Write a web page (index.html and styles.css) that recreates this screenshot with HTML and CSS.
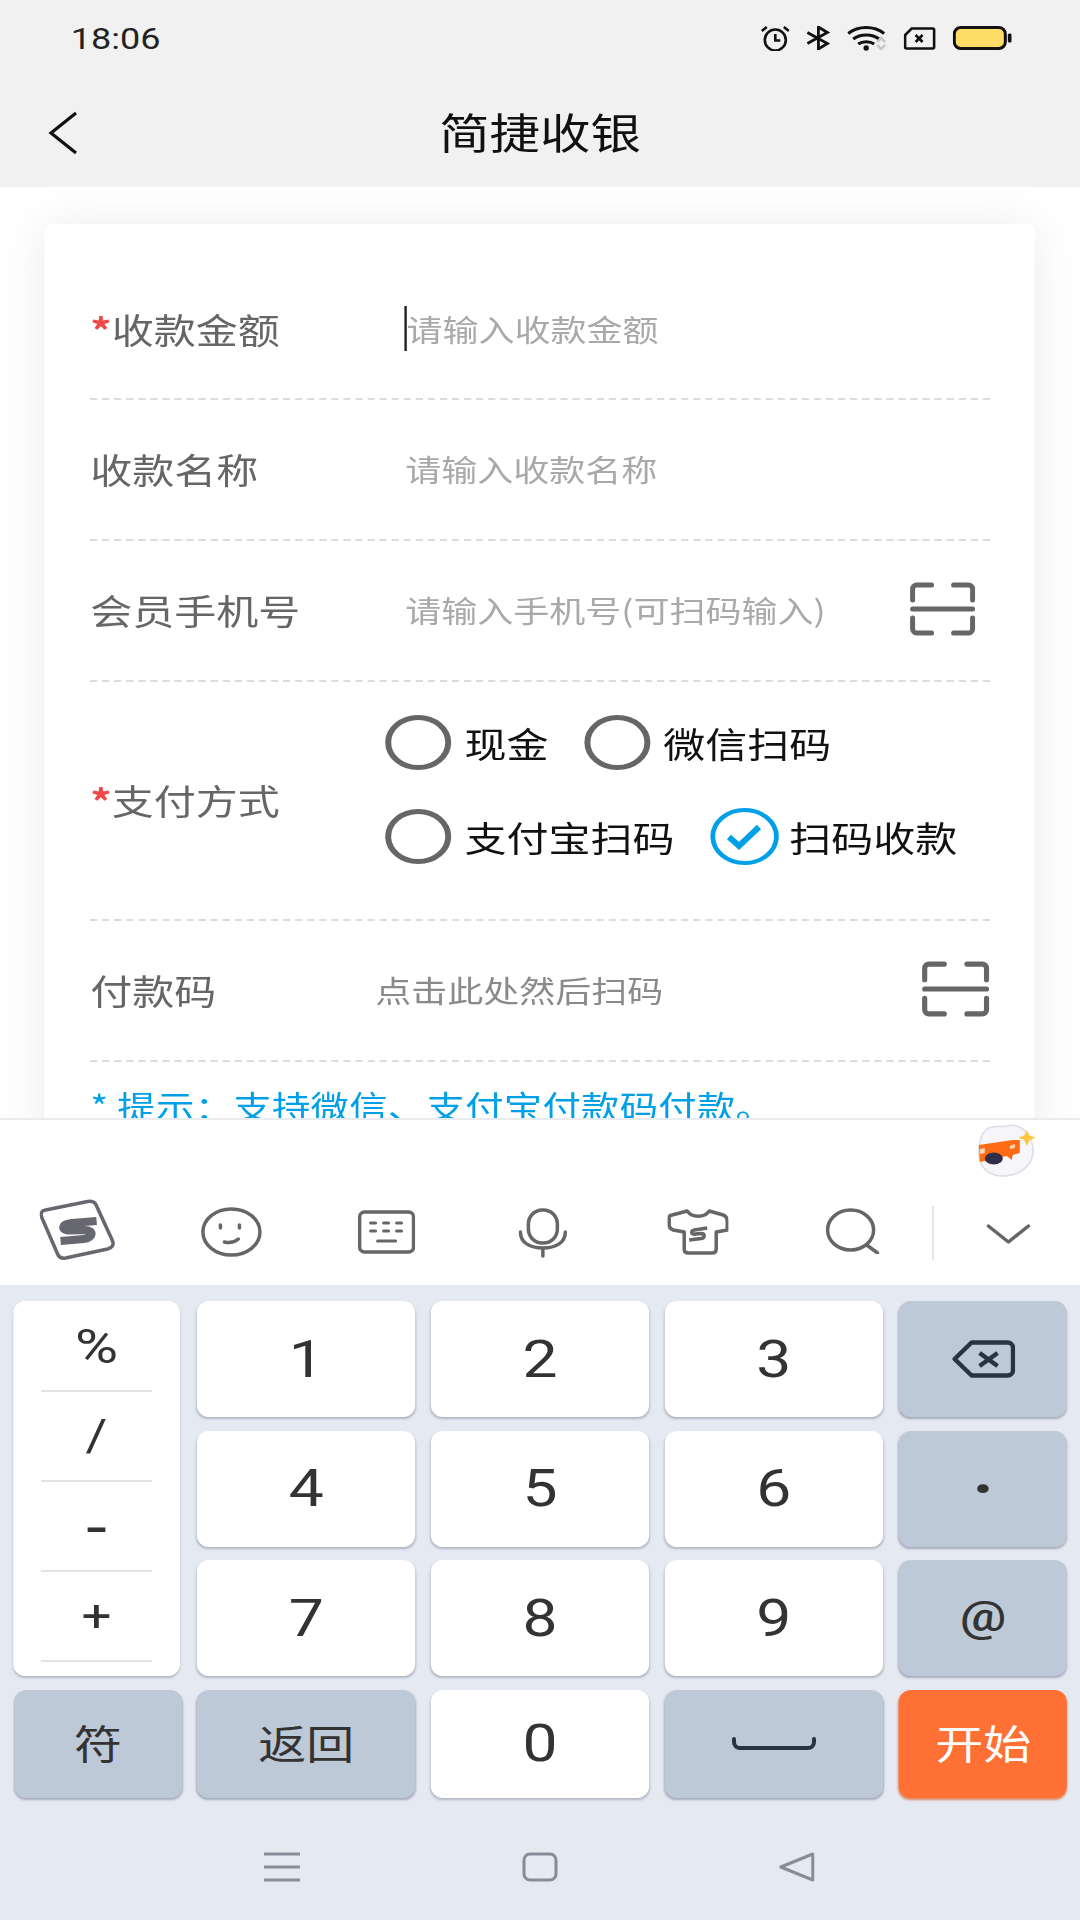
FILE: index.html
```html
<!DOCTYPE html>
<html lang="zh-CN">
<head>
    <meta charset="UTF-8">
    <meta name="viewport" content="width=device-width, initial-scale=1.0">
    <title>简捷收银</title>
    <link rel="stylesheet" href="styles.css">
</head>
<body>
    <header class="top">
        <div class="status-bar">
            <span class="clock">18:06</span>
            <div class="status-icons">
                <svg width="24.200" height="25" viewBox="0 0 29 25" preserveAspectRatio="none" fill="none" stroke="#111" stroke-width="2.600">
                    <circle cx="14.500" cy="14" r="10.500"/>
                    <path d="M14.500 8v6.500h5M1 5l5-4M28 5l-5-4"/>
                </svg>
                <svg width="19.200" height="24" viewBox="0 0 23 24" preserveAspectRatio="none" fill="none" stroke="#111" stroke-width="2.800">
                    <path d="M1 6.500l20 11-9 5.500V1l9 5.500-20 11"/>
                </svg>
                <svg width="33.300" height="25" viewBox="0 0 40 25" preserveAspectRatio="none" fill="none">
                    <path d="M1 7.500c10-8 26-8 36 0M6 13c7-5.500 19-5.500 26 0M11 18c4-3 12-3 16 0" stroke="#111" stroke-width="3"/>
                    <circle cx="19" cy="22" r="2.700" fill="#111"/>
                    <path d="M30 16l4-4 4 4M30 19l4 4 4-4" stroke="#c8c8c8" stroke-width="2.500"/>
                </svg>
                <svg width="26.700" height="23" viewBox="0 0 32 23" preserveAspectRatio="none" fill="none" stroke="#111">
                    <path d="M8 1.500h21a1.500 1.500 0 0 1 1.500 1.500v17a1.500 1.500 0 0 1-1.500 1.500H3A1.500 1.500 0 0 1 1.500 20V8z" stroke-width="2.600"/>
                    <path d="M12 8l7 7M19 8l-7 7" stroke-width="2.600"/>
                </svg>
                <svg width="49.200" height="24" viewBox="0 0 59 24" preserveAspectRatio="none">
                    <rect x="1.500" y="1.500" width="51" height="21" rx="6.500" fill="#ffdd66" stroke="#111" stroke-width="3"/>
                    <rect x="55" y="7.500" width="4" height="9" rx="1.500" fill="#111"/>
                </svg>
            </div>
        </div>
        <div class="nav-bar">
            <svg class="back" width="25" height="44" viewBox="0 0 30 44" preserveAspectRatio="none" fill="none" stroke="#111" stroke-width="3.200">
                <path d="M28 2L3 22l25 20"/>
            </svg>
            <h1 class="page-title">简捷收银</h1>
        </div>
    </header>

    <main class="content">
        <form class="card">
            <div class="form-row">
                <label class="field-label"><span class="required">*</span>收款金额</label>
                <span class="caret"></span>
                <span class="placeholder">请输入收款金额</span>
            </div>
            <div class="form-row">
                <label class="field-label">收款名称</label>
                <span class="placeholder">请输入收款名称</span>
            </div>
            <div class="form-row">
                <label class="field-label">会员手机号</label>
                <span class="placeholder">请输入手机号(可扫码输入)</span>
                <svg class="scan" width="55" height="54" viewBox="0 0 66 54" preserveAspectRatio="none" fill="none" stroke="#666" stroke-width="5" stroke-linecap="round">
                    <path d="M3 18V7a4 4 0 0 1 4-4h15M44 3h15a4 4 0 0 1 4 4v11M3 27h60M3 36v11a4 4 0 0 0 4 4h15M44 51h15a4 4 0 0 0 4-4V36"/>
                </svg>
            </div>
            <div class="form-row pay-row">
                <label class="field-label pay-label"><span class="required">*</span>支付方式</label>
                <div class="pay-options">
                    <div class="pay-line">
                        <span class="option"><i class="radio"></i>现金</span>
                        <span class="option"><i class="radio"></i>微信扫码</span>
                    </div>
                    <div class="pay-line">
                        <span class="option"><i class="radio"></i>支付宝扫码</span>
                        <span class="option">
                            <i class="radio checked">
                                <svg width="30" height="28" viewBox="0 0 36 28" preserveAspectRatio="none" fill="none" stroke="#00a0e9" stroke-width="6">
                                    <path d="M3 14l10 9L33 4"/>
                                </svg>
                            </i>扫码收款
                        </span>
                    </div>
                </div>
            </div>
            <div class="form-row">
                <label class="field-label code-label">付款码</label>
                <span class="placeholder dark">点击此处然后扫码</span>
                <svg class="scan" width="56.700" height="56" viewBox="0 0 66 54" preserveAspectRatio="none" fill="none" stroke="#666" stroke-width="5" stroke-linecap="round">
                    <path d="M3 18V7a4 4 0 0 1 4-4h15M44 3h15a4 4 0 0 1 4 4v11M3 27h60M3 36v11a4 4 0 0 0 4 4h15M44 51h15a4 4 0 0 0 4-4V36"/>
                </svg>
            </div>
            <p class="hint">* 提示：支持微信、支付宝付款码付款。</p>
        </form>
    </main>

    <section class="ime">
        <div class="ime-bar">
            <svg class="mascot" width="50" height="56" viewBox="0 0 60 56" preserveAspectRatio="none">
                <path d="M10 6c8-5 14-1 20-3 12-3 24 5 26 21 2 16-10 28-28 29C12 54 2 44 2 30 2 20 4 11 10 6z" fill="#f6f6fa" stroke="#dcdce6" stroke-width="1.500"/>
                <path d="M2 22l34-5h7v13l-7 2-1 5-5-4-27 6z" fill="#ff6a14"/>
                <path d="M3 26l5-1v5l-5 1zM33 23l5-2v4l-5 1z" fill="#ffd9b0"/>
                <ellipse cx="17" cy="35.500" rx="9" ry="6" fill="#2f3048"/>
                <path d="M50 7l2.500 5.500 6.500 2-6 2.500-3 6-2.500-6-6-2.500 6-2z" fill="#ffc53d"/>
            </svg>
            <div class="ime-tools">
                <svg class="tool tool-logo" width="62.500" height="62" viewBox="0 0 75 62" preserveAspectRatio="none" fill="none" stroke="#67676f">
                    <path d="M6 11l42-8.500q7-1.500 9 4.500l16 35q2 6-5 8l-42 9q-6 1-8-4L2 18q-2-6 4-7z" stroke-width="3.500"/>
                    <path d="M57 22l-25 2c-11 1-11 8-1 7.500l14-.5c10 0 9 8-1 9l-23 2" stroke-width="8"/>
                </svg>
                <svg class="tool tool-smile" width="51.700" height="50" viewBox="0 0 62 50" preserveAspectRatio="none" fill="none" stroke="#666" stroke-width="3.500" stroke-linecap="round">
                    <ellipse cx="31" cy="25" rx="28.500" ry="23"/>
                    <path d="M20 18v3M39 18v3M24 35q8 2 14-3"/>
                </svg>
                <svg class="tool tool-keys" width="48.300" height="44" viewBox="0 0 58 44" preserveAspectRatio="none" fill="none" stroke="#666" stroke-width="3.500" stroke-linecap="round">
                    <rect x="2" y="2" width="54" height="40" rx="5"/>
                    <path d="M13 13h5M26 13h5M39 13h5M13 21h5M26 21h5M39 21h5M20 31h18" stroke-width="3"/>
                </svg>
                <svg class="tool tool-mic" width="40.800" height="50" viewBox="0 0 49 50" preserveAspectRatio="none" fill="none" stroke="#666" stroke-width="3.500" stroke-linecap="round">
                    <rect x="10" y="2" width="29" height="33" rx="14"/>
                    <path d="M2 24c0 11 10 16 22.500 16S47 35 47 24M24.500 40v8"/>
                </svg>
                <svg class="tool tool-shirt" width="51.700" height="46" viewBox="0 0 62 46" preserveAspectRatio="none" fill="none" stroke="#666" stroke-width="3.500" stroke-linejoin="round">
                    <path d="M20 2c5 7 17 7 22 0l14 4c3 1 4 4 4 7v8l-11 2v17c0 3-2 4-4 4H21c-2 0-4-1-4-4V23L6 21c-3-1-4-2-4-5V9c0-2 1-3 3-3z"/>
                    <path d="M40 19l-13 2c-4 1-3 5 1 4l6-.5c4 0 4 4 0 5l-12 1.500" stroke-width="3.500"/>
                </svg>
                <svg class="tool tool-search" width="45" height="46" viewBox="0 0 54 46" preserveAspectRatio="none" fill="none" stroke="#666" stroke-width="3.500" stroke-linecap="round">
                    <ellipse cx="25" cy="22" rx="23" ry="20"/>
                    <path d="M41 37l11 8"/>
                </svg>
                <span class="tool-sep"></span>
                <svg class="tool tool-fold" width="36.700" height="22" viewBox="0 0 44 22" preserveAspectRatio="none" fill="none" stroke="#666" stroke-width="3.500" stroke-linecap="round" stroke-linejoin="round">
                    <path d="M2 3l20 16L42 3"/>
                </svg>
            </div>
        </div>

        <div class="keyboard">
            <div class="symbols">
                <span class="symbol percent">%</span>
                <span class="symbol">/</span>
                <span class="symbol minus">-</span>
                <span class="symbol">+</span>
            </div>
            <div class="key">1</div>
            <div class="key">2</div>
            <div class="key">3</div>
            <div class="key gray side">
                <svg width="53.300" height="38" viewBox="0 0 64 38" preserveAspectRatio="none" fill="none" stroke="#2a3440" stroke-width="4.500" stroke-linejoin="round">
                    <path d="M20 2.500h36c3 0 5.500 2.500 5.500 5.500v22c0 3-2.500 5.500-5.500 5.500H20L3 19z"/>
                    <path d="M28 13l18 13M46 13L28 26"/>
                </svg>
            </div>
            <div class="key">4</div>
            <div class="key">5</div>
            <div class="key">6</div>
            <div class="key gray side dot">·</div>
            <div class="key">7</div>
            <div class="key">8</div>
            <div class="key">9</div>
            <div class="key gray side at">@</div>
            <div class="key gray cjk">符</div>
            <div class="key gray cjk">返回</div>
            <div class="key">0</div>
            <div class="key gray">
                <svg width="70" height="14" viewBox="0 0 84 14" preserveAspectRatio="none" fill="none" stroke="#2a3440" stroke-width="4" stroke-linecap="round">
                    <path d="M2 2v3c0 4 3 6 6 6h68c3 0 6-2 6-6V2"/>
                </svg>
            </div>
            <div class="key go side cjk">开始</div>
        </div>

        <div class="nav-keys">
            <svg width="30" height="30" viewBox="0 0 36 30" preserveAspectRatio="none" fill="none" stroke="#878c99" stroke-width="3">
                <path d="M0 2h36M0 15h36M0 28h36"/>
            </svg>
            <svg width="30" height="30" viewBox="0 0 36 30" preserveAspectRatio="none" fill="none" stroke="#878c99" stroke-width="3">
                <rect x="2" y="2" width="32" height="26" rx="6"/>
            </svg>
            <svg width="30" height="30" viewBox="0 0 36 30" preserveAspectRatio="none" fill="none" stroke="#878c99" stroke-width="3" stroke-linejoin="round">
                <path d="M34 2v26L2 15z"/>
            </svg>
        </div>
    </section>
</body>
</html>
```

FILE: styles.css
```css
* {
    margin: 0;
    padding: 0;
    box-sizing: border-box;
}

html {
    overflow: hidden;
}

/* The app lays out at 900 wide and is widened to fill the 1080 screen */
body {
    width: 900px;
    height: 1920px;
    display: flex;
    flex-direction: column;
    overflow: hidden;
    background: #fff;
    font-family: "Noto Sans CJK SC", "Noto Sans", sans-serif;
    color: #111;
    transform: scaleX(1.2);
    transform-origin: 0 0;
}

/* Status bar and title bar */
.top {
    height: 187px;
    flex-shrink: 0;
    background: #f1f1f1;
}

.status-bar {
    height: 76px;
    padding: 0 56.700px 0 59px;
    display: flex;
    align-items: center;
    justify-content: space-between;
}

.clock {
    font-family: Roboto, sans-serif;
    font-size: 30px;
    color: #222;
}

.status-icons {
    display: flex;
    align-items: center;
    gap: 14.200px;
}

.nav-bar {
    height: 111px;
    padding-bottom: 3px;
    display: flex;
    align-items: center;
    justify-content: center;
    position: relative;
}

.back {
    position: absolute;
    left: 40px;
    top: 35px;
}

.page-title {
    font-size: 42px;
    font-weight: 400;
}

/* Form */
.content {
    flex: 1;
    overflow: hidden;
    padding: 37px 38px 0 37px;
}

.card {
    height: 1000px;
    padding: 37px 37.500px 0 38.300px;
    background: #fff;
    border-radius: 7px / 8px;
    box-shadow: 0 0 45px rgba(0, 0, 0, 0.08);
}

.form-row {
    height: 139px;
    padding-bottom: 3px;
    display: flex;
    align-items: center;
    border-bottom: 2px dashed #dcdcdc;
}

.form-row + .form-row {
    height: 141px;
}

.form-row.pay-row {
    height: 239px;
}

.field-label {
    width: 262.500px;
    flex-shrink: 0;
    font-size: 35px;
    color: #666;
}

.required {
    color: #f04848;
    font-weight: 700;
}

.pay-label {
    width: 245.800px;
}

.code-label {
    width: 237.500px;
}

.caret {
    width: 2px;
    height: 45px;
    margin-left: -1px;
    background: #222;
}

.placeholder {
    flex: 1;
    font-size: 30px;
    color: #a9a9a9;
}

.placeholder.dark {
    color: #8a8a8a;
}

.scan {
    flex-shrink: 0;
    margin-right: 11.700px;
}

.form-row:last-of-type .scan {
    margin-right: 0;
}

.pay-options {
    margin-bottom: 19px;
    display: flex;
    flex-direction: column;
    gap: 39px;
}

.pay-line {
    height: 55px;
    display: flex;
    gap: 29.500px;
}

.option {
    display: flex;
    align-items: center;
    gap: 11px;
    font-size: 35px;
}

.radio {
    width: 55px;
    height: 55px;
    display: flex;
    align-items: center;
    justify-content: center;
    border: 5px solid #666;
    border-radius: 50%;
}

.radio.checked {
    width: 57px;
    height: 57px;
    margin-right: -2px;
    border: 4px solid #00a0e9;
}

.hint {
    padding-top: 20px;
    font-size: 32px;
    letter-spacing: 0.200px;
    color: #00a0e9;
}

/* Input method panel */
.ime {
    flex-shrink: 0;
    height: 802px;
    position: relative;
    background: #e4e9f2;
}

.ime-bar {
    height: 167px;
    padding-top: 5px;
    background: #fff;
    border-top: 2px solid #e9ebef;
    position: relative;
}

.mascot {
    position: absolute;
    top: 3px;
    right: 36px;
}

.ime-tools {
    height: 100%;
    display: flex;
    align-items: flex-end;
    padding: 0 0 24px 33.300px;
    position: relative;
}

.tool {
    flex-shrink: 0;
}

.tool-smile {
    margin: 0 0 4px 71.700px;
}

.tool-keys {
    margin: 0 0 7px 79px;
}

.tool-mic {
    margin: 0 0 3px 85.500px;
}

.tool-shirt {
    margin: 0 0 6px 83px;
}

.tool-search {
    margin: 0 0 7px 80.800px;
}

.tool-sep {
    width: 1.500px;
    height: 54px;
    margin: 0 0 1px 43.300px;
    background: #d4d4d4;
}

.tool-fold {
    margin: 0 0 16px 44.200px;
}

.keyboard {
    padding: 16px 11.670px 0;
    display: grid;
    grid-template-columns: 140px repeat(3, 182.500px) 140px;
    grid-template-rows: repeat(3, 116px) 108px;
    gap: 13.500px 12.300px;
}

.key {
    display: flex;
    align-items: center;
    justify-content: center;
    background: #fff;
    border-radius: 10px / 12px;
    box-shadow: 0 2px 2px #b4b8c4;
    font-family: Roboto, sans-serif;
    font-size: 52px;
    color: #333;
}

.key.gray {
    background: #bec9d8;
    box-shadow: 0 2px 2px #a6acba;
}

/* right hand column sits a touch further out than the even grid */
.key.side {
    margin: 0 -1px 0 1px;
}

.key.dot {
    font-size: 60px;
    font-weight: 700;
}

.key.at {
    padding-bottom: 5px;
    font-size: 43px;
    font-weight: 500;
}

.key.cjk {
    padding-bottom: 4px;
    font-family: "Noto Sans CJK SC", sans-serif;
    font-size: 40px;
}

.key.go {
    background: #ff7034;
    box-shadow: 0 2px 2px #e0865c;
    color: #fff;
}

.symbols {
    grid-row: 1 / span 3;
    width: 138.500px;
    margin-left: -0.500px;
    padding-top: 1px;
    display: flex;
    flex-direction: column;
    align-items: center;
    background: #fff;
    border-radius: 10px / 12px;
    box-shadow: 0 2px 2px #b4b8c4;
}

.symbol {
    width: 93px;
    height: 90px;
    flex-shrink: 0;
    display: flex;
    align-items: center;
    justify-content: center;
    border-bottom: 2px solid #e4e4e8;
    font-family: Roboto, sans-serif;
    font-size: 44px;
    color: #333;
}

.symbol.percent {
    font-size: 49px;
}

.symbol.minus {
    font-size: 62px;
}

.nav-keys {
    margin-top: 54px;
    padding: 0 221px 0 220px;
    display: flex;
    justify-content: space-between;
}
```
